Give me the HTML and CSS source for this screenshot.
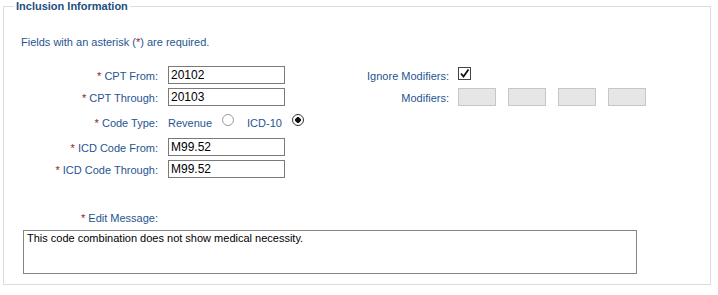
FILE: index.html
```html
<!DOCTYPE html>
<html lang="en">
<head>
<meta charset="utf-8">
<title>Inclusion Information</title>
<link rel="stylesheet" href="styles.css">
</head>
<body>
<fieldset class="panel">
  <legend class="panel-title">Inclusion Information</legend>
  <div class="panel-body">
    <p class="note">Fields with an asterisk (<span class="req">*</span>) are required.</p>
    <div class="form-grid">
      <label class="lbl col-a"><span class="req">*</span> CPT From:</label>
      <input class="field" type="text" value="20102">
      <label class="lbl">Ignore Modifiers:</label>
      <span class="check"><svg width="11" height="11" viewBox="0 0 11 11"><path d="M2 5.5 L4.5 8.5 L9.5 1.5" fill="none" stroke="#111" stroke-width="1.8"/></svg></span>

      <label class="lbl col-a"><span class="req">*</span> CPT Through:</label>
      <input class="field" type="text" value="20103">
      <label class="lbl">Modifiers:</label>
      <div class="mods">
        <input class="mod" type="text" disabled>
        <input class="mod" type="text" disabled>
        <input class="mod" type="text" disabled>
        <input class="mod" type="text" disabled>
      </div>

      <label class="lbl col-a"><span class="req">*</span> Code Type:</label>
      <div class="radios">
        <span class="opt">Revenue</span><input class="radio" type="radio" name="ct">
        <span class="opt opt-2">ICD-10</span><input class="radio" type="radio" name="ct" checked>
      </div>

      <label class="lbl col-a"><span class="req">*</span> ICD Code From:</label>
      <input class="field" type="text" value="M99.52">

      <label class="lbl col-a"><span class="req">*</span> ICD Code Through:</label>
      <input class="field" type="text" value="M99.52">
    </div>
    <div class="edit-label-row">
      <label class="lbl edit-lbl"><span class="req">*</span> Edit Message:</label>
    </div>
    <textarea class="message">This code combination does not show medical necessity.</textarea>
  </div>
</fieldset>
</body>
</html>
```
FILE: styles.css
```css
html, body {
  margin: 0;
  padding: 0;
  background: #ffffff;
}

body {
  font-family: "Liberation Sans", Arial, sans-serif;
  font-size: 11px;
  color: #1f5591;
}

.panel {
  margin: 0 7px 0 3px;
  padding: 0;
  border: 1px solid #dcdcdc;
  min-width: 0;
}

.panel-title {
  margin-left: 10px;
  padding: 0 2px;
  font-weight: bold;
  font-size: 11px;
  line-height: 13px;
  color: #1d4f80;
}

.panel-body {
  padding: 0 0 10px 17px;
}

.note {
  margin: 23px 0 0 0;
  line-height: 13px;
}

.req {
  color: #8b1c1c;
}

.form-grid {
  margin-top: 15px;
  display: grid;
  grid-template-columns: 137px 117px 154px auto;
  grid-template-rows: 22px 22px 28px 22px 22px;
  column-gap: 10px;
  align-items: center;
}

.lbl {
  text-align: right;
  line-height: 13px;
  padding-top: 3px;
  white-space: nowrap;
}

.col-a {
  grid-column: 1;
}

.field {
  box-sizing: border-box;
  width: 117px;
  height: 18px;
  margin: 0;
  padding: 0 2px;
  border: 1px solid #7a7a7a;
  font-family: "Liberation Sans", Arial, sans-serif;
  font-size: 12px;
  color: #000;
  background: #fff;
}

.check {
  box-sizing: border-box;
  width: 13px;
  height: 13px;
  margin-left: -1px;
  margin-bottom: 3px;
  border: 1px solid #444;
  background: #fff;
  display: flex;
  align-items: center;
  justify-content: center;
}

.check svg {
  display: block;
}

.mods {
  display: flex;
  gap: 12px;
  margin-left: -1px;
}

.mod {
  box-sizing: border-box;
  width: 38px;
  height: 18px;
  margin: 0;
  padding: 0;
  border: 1px solid #c6c6c6;
  background: #e6e6e6;
}

.radios {
  grid-column: 2 / -1;
  display: flex;
  align-items: center;
  padding-top: 3px;
  line-height: 13px;
}

.radio {
  appearance: none;
  -webkit-appearance: none;
  box-sizing: border-box;
  width: 12px;
  height: 12px;
  margin: 0 0 8px 10px;
  border: 1px solid #9c9c9c;
  border-radius: 50%;
  background: #fff;
}

.radio:checked {
  border-color: #333;
  background: radial-gradient(circle, #111 0 2.6px, #fff 3px);
}

.opt-2 {
  margin-left: 13px;
}

.edit-label-row {
  margin-top: 32px;
  display: flex;
}

.edit-lbl {
  width: 137px;
  padding-top: 0;
}

.message {
  display: block;
  box-sizing: border-box;
  width: 614px;
  height: 44px;
  margin: 5px 0 0 2px;
  padding: 1px 3px;
  border: 1px solid #858585;
  font-family: "Liberation Sans", Arial, sans-serif;
  font-size: 11px;
  line-height: 13px;
  color: #000;
  resize: none;
  background: #fff;
}
```
